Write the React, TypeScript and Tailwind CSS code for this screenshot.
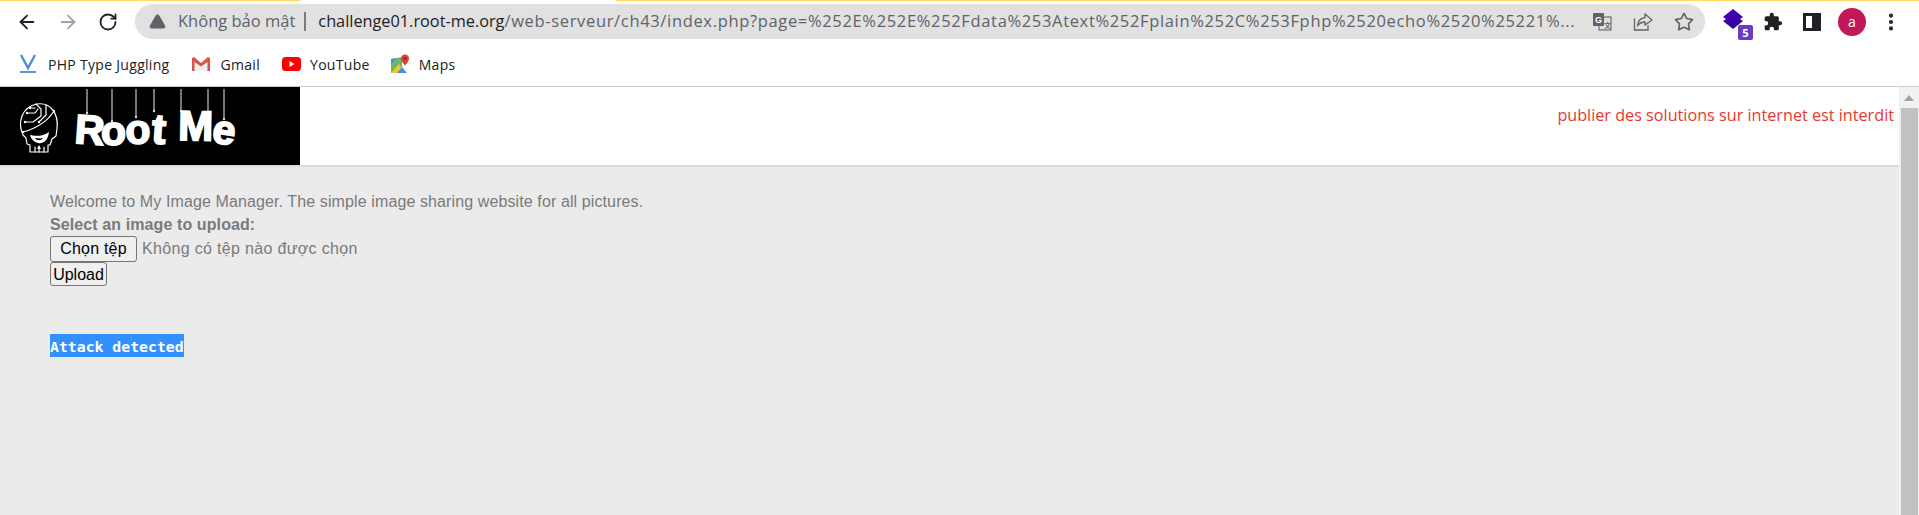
import { ArrowLeft, ArrowRight, RotateCw, TriangleAlert, Star, MoreVertical } from "lucide-react";

const chromeFont = "font-['Open_Sans','Noto_Sans',sans-serif]";

function Logo() {
  const strings = [
    [87, 113],
    [112, 121],
    [136, 117],
    [154, 111],
    [181, 111],
    [208, 112],
    [224, 119],
  ];
  const letters = [
    { c: "R", x: 74, y: 143, r: 4, s: 41 },
    { c: "o", x: 101, y: 145, r: 0, s: 41 },
    { c: "o", x: 126, y: 144, r: -3, s: 41 },
    { c: "t", x: 151, y: 143, r: 4, s: 42 },
    { c: "M", x: 178, y: 140, r: 1, s: 42 },
    { c: "e", x: 211, y: 142, r: 9, s: 41 },
  ];
  return (
    <svg width="300" height="78" viewBox="0 87 300 78" className="block">
      <rect x="0" y="87" width="300" height="78" fill="#000" />
      {strings.map(([x, end], i) => (
        <g key={i}>
          <line x1={x} y1="89" x2={x} y2={end} stroke="#a8a8a8" strokeWidth="1.4" />
          <circle cx={x} cy={end} r="1.2" fill="#ddd" />
        </g>
      ))}
      {letters.map((l, i) => (
        <text
          key={i}
          x={l.x}
          y={l.y}
          fontSize={l.s}
          fontWeight="700"
          fill="#fff"
          stroke="#fff"
          strokeWidth="1.8"
          fontFamily="'Liberation Sans', sans-serif"
          transform={`rotate(${l.r} ${l.x} ${l.y})`}
        >
          {l.c}
        </text>
      ))}
      {/* skull */}
      <g fill="none" stroke="#fff" strokeWidth="1.2" strokeLinejoin="round" strokeLinecap="round">
        <path d="M23 135 C17 122 22 107 37 104 C50 102 59 113 57 129 L56 136 L52 139 L50 145 L48 145 L48 152 L30 152 L30 145 L27 144 L26 138 Z" />
        <path d="M23 132 C34 129 47 122 54 111" />
        <path d="M36 104 L41 109 L41 116 L33 122 L25 122" />
        <path d="M27 113 L35 113 L38 109" />
        <path d="M30 108 L35 108" />
        <path d="M46 105 L46 115 L39 122" />
        <path d="M35 152 L35 147 M39 152 L39 147 M44 152 L44 147" />
      </g>
      <g fill="#fff">
        <circle cx="25" cy="122" r="1.2" />
        <circle cx="27" cy="113" r="1.2" />
        <circle cx="30" cy="108" r="1.2" />
        <circle cx="39" cy="122" r="1.2" />
        <circle cx="23" cy="132" r="1.2" />
        <circle cx="54" cy="111" r="1.2" />
        <path d="M30 135 C34 136 43 137 49 132 C48 141 43 144 38 143 C34 142 31 139 30 135 Z" />
        <path d="M39 145 L41 149 L37 149 Z" />
      </g>
      <path d="M35 138 C37 138 40 139 43 138 C41 141 37 141 35 138 Z" fill="#000" />
    </svg>
  );
}

function TranslateIcon() {
  return (
    <svg width="20" height="20" viewBox="0 0 20 20">
      <rect x="7" y="5" width="12" height="13" fill="#e0e0e0" stroke="#6f6f6f" strokeWidth="1.2" />
      <rect x="1" y="1" width="11" height="13" rx="1" fill="#5f6368" />
      <text x="3" y="11" fontSize="9" fontWeight="700" fill="#fff" fontFamily="'Liberation Sans', sans-serif">G</text>
      <text x="12" y="15.5" fontSize="7" fontWeight="700" fill="#5f6368" fontFamily="'Noto Sans CJK SC', sans-serif">文</text>
    </svg>
  );
}

function ShareIcon() {
  return (
    <svg width="20" height="20" viewBox="0 0 20 20" fill="none" stroke="#5f6368" strokeWidth="1.3">
      <path d="M1.5 6.5 V18 H15 V13" />
      <path d="M12 2 L19 8 L12 13 V10 C9 10 6.5 11 4.5 14 C5 9 8 6 12 5.5 Z" strokeLinejoin="round" />
    </svg>
  );
}

function StackIcon() {
  return (
    <div className="relative w-[28px] h-[28px]">
      <svg width="22" height="24" viewBox="0 0 22 24" className="absolute left-0 top-0">
        <path d="M1 13 L11 7 L21 13 L11 21 Z" fill="#2e0a8f" />
        <path d="M1 9 L11 1 L21 9 L11 16 Z" fill="#4200b5" />
      </svg>
      <span className={`absolute right-[-3px] bottom-[-4px] w-[15px] h-[15px] rounded-[2px] bg-[#6a3cc4] text-white text-[11px] font-bold leading-[15px] text-center ${chromeFont}`}>
        5
      </span>
    </div>
  );
}

function PuzzleIcon() {
  return (
    <svg width="20" height="20" viewBox="0 0 24 24" fill="#202124">
      <path d="M20.5 11H19V7a2 2 0 0 0-2-2h-4V3.5a2.5 2.5 0 0 0-5 0V5H4a2 2 0 0 0-2 2v3.8h1.5a2.7 2.7 0 0 1 0 5.4H2V20a2 2 0 0 0 2 2h3.8v-1.5a2.7 2.7 0 0 1 5.4 0V22H17a2 2 0 0 0 2-2v-4h1.5a2.5 2.5 0 0 0 0-5Z" />
    </svg>
  );
}

function VIcon() {
  return (
    <svg width="18" height="20" viewBox="0 0 18 20">
      <path d="M2 1 L9 14 L16 1" fill="none" stroke="#4f8bd8" strokeWidth="2.4" />
      <rect x="1" y="17" width="16" height="2" fill="#5b95de" />
    </svg>
  );
}

function GmailIcon() {
  return (
    <svg width="20" height="16" viewBox="0 0 20 16">
      <path d="M2 2 L10 8 L18 2 V15 H2 Z" fill="#eeeeee" />
      <path d="M1 15 V2 L3 1 L10 7 L17 1 L19 2 V15 H16.5 V6 L10 10.5 L3.5 6 V15 Z" fill="#d9534a" />
    </svg>
  );
}

function YouTubeIcon() {
  return (
    <svg width="19" height="14" viewBox="0 0 19 14">
      <rect width="19" height="14" rx="3.5" fill="#ff0000" />
      <path d="M7.5 4 L12.5 7 L7.5 10 Z" fill="#fff" />
    </svg>
  );
}

function MapsIcon() {
  return (
    <svg width="20" height="20" viewBox="0 0 20 20">
      <path d="M1 5 L12 3 V17 L1 19 Z" fill="#6cb96a" />
      <path d="M1 19 L9 10 L15 19 Z" fill="#f6c62f" />
      <path d="M7 19 L12 13 L17 19 Z" fill="#4a8fe7" />
      <path d="M1 5 L7 4 L1 10 Z" fill="#4a8fe7" />
      <path d="M15 0.5 C12.5 0.5 11 2.3 11 4.5 C11 7.5 15 11.5 15 11.5 C15 11.5 19 7.5 19 4.5 C19 2.3 17.5 0.5 15 0.5 Z" fill="#db4437" />
      <circle cx="15" cy="4.5" r="1.4" fill="#8c2a22" />
    </svg>
  );
}

function Bookmark({ icon, label, iconBox, gap }: { icon: React.ReactNode; label: string; iconBox: string; gap: string }) {
  return (
    <div className={`flex items-center ${gap}`}>
      <div className={`flex justify-center items-center ${iconBox}`}>{icon}</div>
      <span className="text-[14px] tracking-[0.3px] text-[#202124] whitespace-nowrap">{label}</span>
    </div>
  );
}

export default function App() {
  return (
    <div className="w-[1919px] h-[515px] overflow-hidden flex flex-col bg-white font-['Liberation_Sans',Arial,sans-serif]">
      <div className="flex h-px shrink-0">
        <div className="w-[300px] bg-[#fdd663]" />
        <div className="w-[316px]" />
        <div className="flex-1 bg-[#fdd663]" />
      </div>

      {/* toolbar */}
      <div className="h-[41px] shrink-0 flex items-center pl-[16px]">
        <ArrowLeft className="w-[22px] h-[22px] text-[#202124]" strokeWidth={2} />
        <ArrowRight className="w-[22px] h-[22px] ml-[19px] text-[#a3a3a3]" strokeWidth={2} />
        <RotateCw className="w-[20px] h-[20px] ml-[19px] text-[#202124]" strokeWidth={2.2} />
        <div className={`ml-[17px] w-[1570px] h-[35px] rounded-full bg-[#e1e1e1] flex items-center pl-[14px] pr-[11px] ${chromeFont}`}>
          <TriangleAlert className="w-[17px] h-[17px] text-[#5f6368] fill-[#5f6368] stroke-[#5f6368]" />
          <span className="ml-[12px] text-[16.5px] text-[#5f6368] whitespace-nowrap">Không bảo mật</span>
          <div className="ml-[9px] w-[2px] h-[19px] bg-[#7a7a7a]" />
          <div className="ml-[12px] w-[1256px] text-[16.5px] text-[#5f6368] whitespace-nowrap overflow-hidden">
            <span className="text-[#202124] text-[16.3px]">challenge01.root-me.org</span>
            <span className="tracking-[0.66px]">/web-serveur/ch43/index.php?page=%252E%252E%252Fdata%253Atext%252Fplain%252C%253Fphp%2520echo%2520%25221%...</span>
          </div>
          <div className="ml-auto flex items-center gap-[21px]">
            <TranslateIcon />
            <ShareIcon />
            <Star className="w-[20px] h-[20px] text-[#5f6368]" strokeWidth={2} />
          </div>
        </div>
        <div className="ml-[17px]">
          <StackIcon />
        </div>
        <div className="ml-[13px]">
          <PuzzleIcon />
        </div>
        <div className="ml-[20px] w-[18px] h-[18px] border-[3px] border-[#202124] bg-white flex justify-end">
          <div className="w-[6px] bg-[#202124]" />
        </div>
        <div className={`ml-[17px] w-[28px] h-[28px] rounded-full bg-[#c2185b] text-white text-[14px] flex items-center justify-center ${chromeFont}`}>
          a
        </div>
        <MoreVertical className="ml-[14px] w-[22px] h-[22px] text-[#202124]" strokeWidth={2.5} />
      </div>

      {/* bookmarks */}
      <div className={`h-[45px] shrink-0 flex items-center pl-[18px] border-b border-[#cfcfcf] ${chromeFont}`}>
        <Bookmark icon={<VIcon />} label="PHP Type Juggling" iconBox="w-[20px]" gap="gap-[10px]" />
        <div className="ml-[21px]">
          <Bookmark icon={<GmailIcon />} label="Gmail" iconBox="w-[20px]" gap="gap-[10px]" />
        </div>
        <div className="ml-[22px]">
          <Bookmark icon={<YouTubeIcon />} label="YouTube" iconBox="w-[19px]" gap="gap-[9px]" />
        </div>
        <div className="ml-[20px]">
          <Bookmark icon={<MapsIcon />} label="Maps" iconBox="w-[20px]" gap="gap-[9px]" />
        </div>
      </div>

      {/* page */}
      <div className="flex-1 flex min-h-0">
        <div className="flex-1 flex flex-col bg-[#ebebeb]">
          <div className="h-[78px] shrink-0 bg-white flex justify-between shadow-[0_1px_2px_rgba(0,0,0,0.12)]">
            <Logo />
            <span className="mt-[16px] mr-[5px] h-[24px] text-[16.2px] leading-[24px] text-[#e8392e] font-['Open_Sans',sans-serif] whitespace-nowrap">
              publier des solutions sur internet est interdit
            </span>
          </div>
          <div className="pl-[50px] pt-[26px] text-[16px] text-[#7a7a7a]">
            <div className="h-[24px] leading-[21px] tracking-[0.11px]">Welcome to My Image Manager. The simple image sharing website for all pictures.</div>
            <div className="h-[21px] leading-[20px] font-bold tracking-[0.1px]">Select an image to upload:</div>
            <div className="h-[26px] flex items-center">
              <button className="w-[87px] h-[26px] border border-[#767676] rounded-[3px] bg-[#efefef] text-black text-[16px] tracking-[0.2px]">Chọn tệp</button>
              <span className="ml-[5px] tracking-[0.33px]">Không có tệp nào được chọn</span>
            </div>
            <button className="block w-[57px] h-[24px] border border-[#767676] rounded-[3px] bg-[#efefef] text-black text-[16px]">Upload</button>
            <div className="mt-[48px] w-[134px] h-[23px] bg-[#3390ff] text-white text-[14.8px] leading-[25px] font-bold font-['DejaVu_Sans_Mono',monospace] whitespace-nowrap overflow-hidden">
              Attack detected
            </div>
          </div>
        </div>

        {/* scrollbar */}
        <div className="w-[20px] shrink-0 bg-[#f1f1f1] flex flex-col items-center">
          <div className="h-[21px] flex items-center justify-center">
            <div className="w-0 h-0 border-x-[5px] border-x-transparent border-b-[6px] border-b-[#a3a3a3]" />
          </div>
          <div className="flex-1 w-[17px] ml-[1px] bg-[#c1c1c1]" />
        </div>
      </div>
    </div>
  );
}
